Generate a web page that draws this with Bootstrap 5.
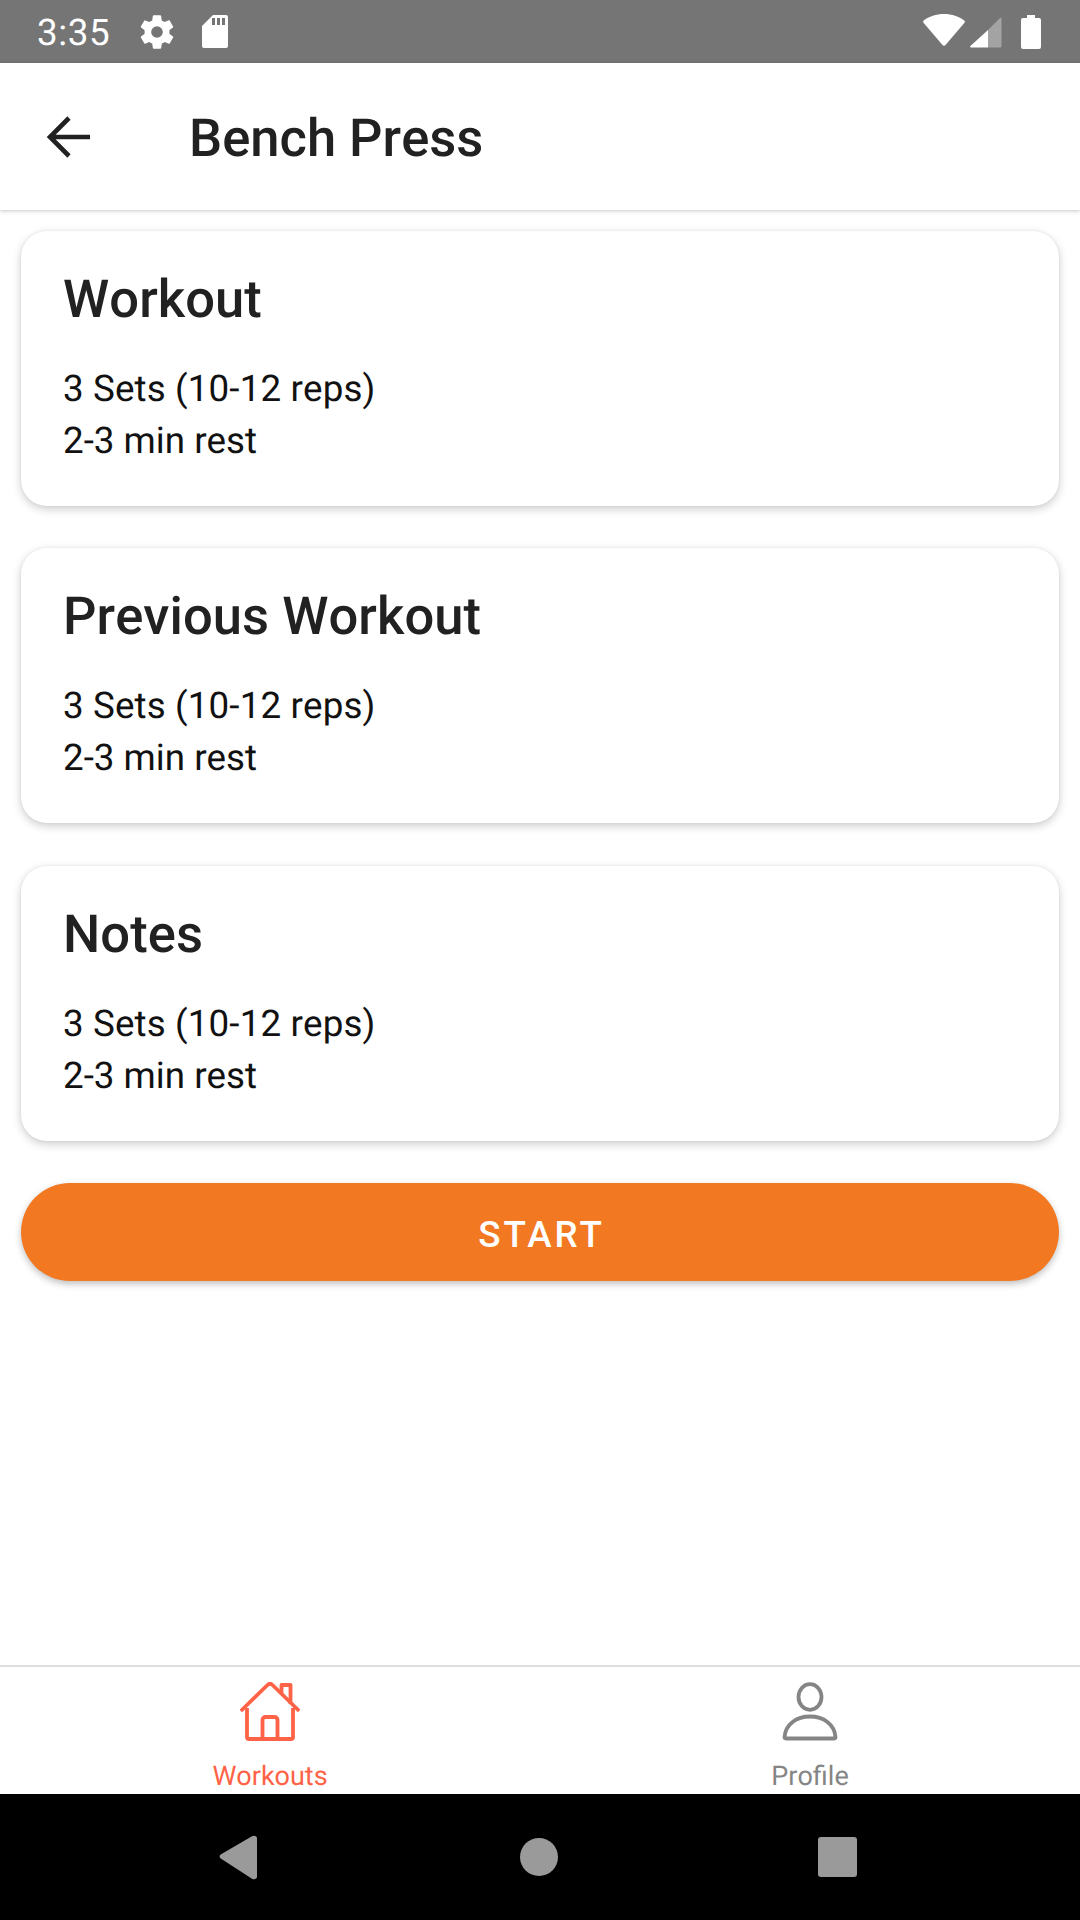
<!DOCTYPE html>
<html lang="en">
<head>
<meta charset="utf-8">
<title>Bench Press</title>
<link href="https://cdn.jsdelivr.net/npm/bootstrap@5.3.0/dist/css/bootstrap.min.css" rel="stylesheet">
<style>
html, body { height: 100%; margin: 0; }
body { width: 1080px; height: 1920px; font-family: Roboto, "Liberation Sans", sans-serif; background: #fff; overflow: hidden; text-rendering: geometricPrecision; font-kerning: none; }
.app-shell { height: 1920px; }
.status-strip { height: 63px; background: #757575; color: #fff; font-size: 36.75px; padding: 0 39px 0 37px; }
.status-time { line-height: 63px; margin-top: 2px; margin-right: 27px; letter-spacing: .6px; }
.gear-icon { margin-right: 25px; }
.wifi-icon { margin-right: 5px; margin-bottom: 3px; }
.signal-icon { margin-right: 19px; }
.top-bar { height: 147px; background: #fff; box-shadow: 0 1px 4px rgba(0,0,0,.22); position: relative; z-index: 2; padding-left: 46px; }
.top-title { font-size: 52.5px; font-weight: 500; color: #212121; margin: 4px 0 0 99px; line-height: 147px; }
.main-area { padding: 21px 21px 0; background: #fff; }
.info-tile { border: 0; border-radius: 26px; height: 275px; padding: 35px 42px 0; margin-bottom: 42.3px; box-shadow: 0 3px 10px rgba(0,0,0,.2), 0 0 3px rgba(0,0,0,.06); }
.info-title { font-size: 52.5px; font-weight: 500; color: #212121; line-height: 66px; margin: 0 0 31px; letter-spacing: .06px; }
.info-text { font-size: 36.75px; line-height: 52px; color: #111; margin: 0; }
.sets-line { letter-spacing: .13px; }
.start-btn { display: block; width: 100%; height: 98px; padding: 11px 0 6px 3px; border: 0; border-radius: 49px; background: #f27821; color: #fff; font-size: 36.75px; font-weight: 500; letter-spacing: 3px; box-shadow: 0 3px 7px rgba(0,0,0,.25); }
.start-btn:hover, .start-btn:active { background: #f27821 !important; color: #fff !important; }
.tab-strip { height: 129px; border-top: 2px solid #dedede; background: #fff; }
.tab-cell { width: 540px; padding-top: 15px; color: #858585; font-size: 27px; line-height: 30px; }
.tab-cell.is-active { color: #ff6347; }
.tab-label { margin-top: 19px; }
.nav-strip { height: 126px; background: #000; }
.nav-strip > svg { display: block; }
</style>
</head>
<body>
<div class="app-shell d-flex flex-column">
  <div class="status-strip d-flex align-items-center flex-shrink-0">
    <span class="status-time">3:35</span>
    <svg class="gear-icon" width="40" height="40" viewBox="0 0 24 24" fill="#fff"><path fill-rule="evenodd" d="M19.4 13c.05-.33.08-.66.08-1s-.03-.67-.08-1l2.15-1.67c.2-.15.25-.42.12-.64l-2-3.46c-.12-.22-.4-.3-.62-.22l-2.5 1c-.52-.4-1.08-.73-1.7-.98l-.38-2.65A.5.5 0 0 0 14 2h-4a.5.5 0 0 0-.49.42l-.38 2.65c-.61.25-1.18.58-1.7.98l-2.5-1a.5.5 0 0 0-.61.22l-2 3.46c-.13.22-.07.49.12.64L4.6 11c-.05.33-.08.67-.08 1s.03.67.08 1l-2.15 1.67a.5.5 0 0 0-.12.64l2 3.46c.12.22.4.3.61.22l2.5-1c.52.4 1.09.73 1.7.98l.38 2.65c.04.24.25.42.49.42h4c.25 0 .45-.18.49-.42l.38-2.65c.62-.25 1.18-.58 1.7-.98l2.5 1c.22.08.5 0 .62-.22l2-3.46a.5.5 0 0 0-.12-.64L19.4 13zM12 15.5a3.5 3.5 0 1 1 0-7 3.5 3.5 0 0 1 0 7z"/></svg>
    <svg width="26" height="33" viewBox="0 0 26 33"><path fill="#fff" d="M11 0h13a2 2 0 0 1 2 2v29a2 2 0 0 1-2 2H2a2 2 0 0 1-2-2V11z"/><path fill="#757575" d="M10 3h3v7h-3zM15 3h3v7h-3zM20 3h3v7h-3z"/></svg>
    <div class="ms-auto d-flex align-items-center">
      <svg class="wifi-icon" width="42" height="32" viewBox="0 0 42 32"><path fill="#fff" d="M21 0C13 0 6 2.500 0.700 6.500c-.7.6-.8 1.500-.2 2.200L19.500 31c.8 1 2.200 1 3 0L41.500 8.700c.6-.7.5-1.600-.2-2.200C36 2.500 29 0 21 0z"/></svg>
      <svg class="signal-icon" width="32" height="32" viewBox="0 0 32 32"><path fill="#a3a3a3" d="M18 14 30 2c.5-.5 1.500-.2 1.500.6V30a1.500 1.500 0 0 1-1.500 1.500H18z"/><path fill="#fff" d="M18 14v17.500H1c-.8 0-1.100-.9-.6-1.400z"/></svg>
      <svg width="20" height="34" viewBox="0 0 20 34"><path fill="#fff" d="M6 0h8v3h4a2 2 0 0 1 2 2v27a2 2 0 0 1-2 2H2a2 2 0 0 1-2-2V5a2 2 0 0 1 2-2h4z"/></svg>
    </div>
  </div>

  <div class="top-bar d-flex align-items-center flex-shrink-0">
    <svg width="44" height="44" viewBox="0 0 44 44" fill="none" stroke="#212121" stroke-width="4.600"><path d="M44 22H4M23 3 4 22l19 19"/></svg>
    <h1 class="top-title">Bench Press</h1>
  </div>

  <main class="main-area flex-grow-1">
    <div class="card info-tile">
      <h2 class="info-title">Workout</h2>
      <p class="info-text"><span class="sets-line">3 Sets (10-12 reps)</span><br>2-3 min rest</p>
    </div>
    <div class="card info-tile">
      <h2 class="info-title">Previous Workout</h2>
      <p class="info-text"><span class="sets-line">3 Sets (10-12 reps)</span><br>2-3 min rest</p>
    </div>
    <div class="card info-tile">
      <h2 class="info-title">Notes</h2>
      <p class="info-text"><span class="sets-line">3 Sets (10-12 reps)</span><br>2-3 min rest</p>
    </div>
    <button type="button" class="btn start-btn">START</button>
  </main>

  <div class="tab-strip d-flex flex-shrink-0">
    <div class="tab-cell is-active d-flex flex-column align-items-center">
      <svg width="60" height="60" viewBox="0 0 60 60" fill="none" stroke="#ff6347" stroke-width="3.800" stroke-linejoin="round"><path d="M.8 29 27.500 3c1.700-1.700 3.300-1.700 5 0L59.200 29"/><path d="M7 26v29a2 2 0 0 0 2 2h42a2 2 0 0 0 2-2V26"/><path d="M22.500 57V38a3 3 0 0 1 3-3h9a3 3 0 0 1 3 3v19"/><path d="M41.500 12V3h9v19"/></svg>
      <div class="tab-label">Workouts</div>
    </div>
    <div class="tab-cell d-flex flex-column align-items-center">
      <svg width="60" height="60" viewBox="0 0 60 60" fill="none" stroke="#858585" stroke-width="3.800" stroke-linejoin="round"><ellipse cx="30" cy="15" rx="11.500" ry="12.800"/><path d="M6 56.500c-.8 0-1.500-.6-1.500-1.400C5.500 42 16.500 34.500 30 34.500S54.500 42 55.500 55.100c0 .8-.7 1.400-1.500 1.400z"/></svg>
      <div class="tab-label">Profile</div>
    </div>
  </div>

  <div class="nav-strip d-flex align-items-center flex-shrink-0">
    <svg width="1080" height="126" viewBox="0 0 1080 126"><path fill="#9a9a9a" d="M221.500 60 252 42.300c2.200-1.200 5-.2 5 2v38.400c0 2.200-2.800 3.200-5 2L221.500 65c-2.500-1.500-2.500-3.500 0-5z"/><circle cx="539" cy="63" r="19" fill="#9a9a9a"/><rect x="818" y="43" width="39" height="40" rx="3" fill="#9a9a9a"/></svg>
  </div>
</div>
<script src="https://cdn.jsdelivr.net/npm/bootstrap@5.3.0/dist/js/bootstrap.bundle.min.js"></script>
</body>
</html>
